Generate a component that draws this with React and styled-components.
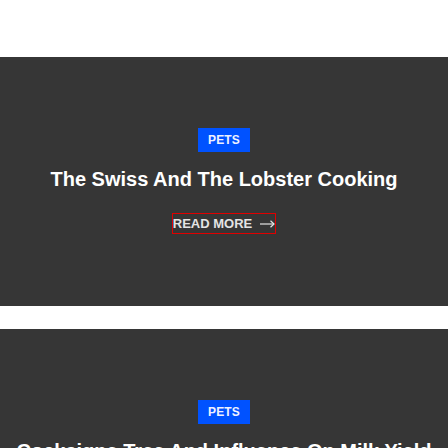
import React from "react";
import styled, { createGlobalStyle } from "styled-components";

const Global = createGlobalStyle`
  html, body { margin: 0; padding: 0; background: #ffffff; }
  body { font-family: "Liberation Sans", Arial, sans-serif; }
`;

const Page = styled.div`
  background: #ffffff;
  padding-top: 57px;
  display: flex;
  flex-direction: column;
  gap: 23px;
`;

const Hero = styled.section`
  background: #363636;
  padding: 71px 12px 72px;
  display: flex;
  flex-direction: column;
  align-items: center;
  text-align: center;
`;

const Badge = styled.span`
  display: inline-flex;
  align-items: center;
  justify-content: center;
  width: 52px;
  height: 24px;
  background: #0052ff;
  color: #eef1ff;
  font-size: 12px;
  font-weight: 700;
  letter-spacing: 0.2px;
  text-transform: uppercase;
`;

const Title = styled.h2`
  margin: 15px 0 0;
  font-size: 20px;
  line-height: 24px;
  font-weight: 700;
  color: #ffffff;
`;

const ReadMore = styled.a`
  margin-top: 22px;
  display: inline-flex;
  align-items: center;
  gap: 8px;
  height: 19px;
  border: 1px solid #e00000;
  color: #e4e4e4;
  font-size: 13px;
  font-weight: 700;
  text-decoration: none;
  text-transform: uppercase;
  cursor: pointer;
`;

const Arrow = () => (
  <svg width="15" height="8" viewBox="0 0 15 8" fill="none" stroke="#e4e4e4" strokeWidth="1.2">
    <path d="M0 4H14" />
    <path d="M10.5 0.8L14 4L10.5 7.2" />
  </svg>
);

const posts = [
  { tag: "Pets", title: "The Swiss And The Lobster Cooking" },
  { tag: "Pets", title: "Cockaigne Tree And Influence On Milk Yield In Dairy Cows" },
];

export default function App() {
  return (
    <>
      <Global />
      <Page>
        {posts.map((p, i) => (
          <Hero key={i}>
            <Badge>{p.tag}</Badge>
            <Title>{p.title}</Title>
            <ReadMore>
              Read More <Arrow />
            </ReadMore>
          </Hero>
        ))}
      </Page>
    </>
  );
}
